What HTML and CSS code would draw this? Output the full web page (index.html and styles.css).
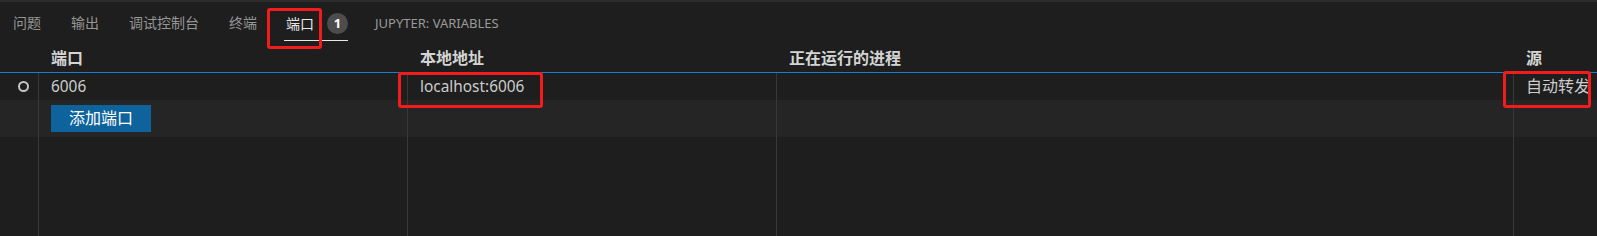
FILE: index.html
```html
<!DOCTYPE html>
<html lang="zh-CN">
<head>
<meta charset="utf-8">
<title>端口</title>
<link rel="stylesheet" href="styles.css">
</head>
<body>
<div class="panel">
  <div class="tabs">
    <div class="tab">问题</div>
    <div class="tab">输出</div>
    <div class="tab">调试控制台</div>
    <div class="tab">终端</div>
    <div class="tab active"><span>端口</span><span class="badge">1</span></div>
    <div class="tab upper">JUPYTER: VARIABLES</div>
  </div>
  <div class="table">
    <div class="row head">
      <div class="cell c0"></div>
      <div class="cell">端口</div>
      <div class="cell">本地地址</div>
      <div class="cell">正在运行的进程</div>
      <div class="cell">源</div>
    </div>
    <div class="row body">
      <div class="cell c0"><span class="ring"></span></div>
      <div class="cell sep latin">6006</div>
      <div class="cell sep latin">localhost:6006</div>
      <div class="cell sep"></div>
      <div class="cell sep">自动转发</div>
    </div>
    <div class="row body add">
      <div class="cell c0"></div>
      <div class="cell sep"><button class="btn">添加端口</button></div>
      <div class="cell sep"></div>
      <div class="cell sep"></div>
      <div class="cell sep"></div>
    </div>
    <div class="row body filler">
      <div class="cell c0"></div>
      <div class="cell sep"></div>
      <div class="cell sep"></div>
      <div class="cell sep"></div>
      <div class="cell sep"></div>
    </div>
  </div>
  <div class="mark m1"></div>
  <div class="mark m2"></div>
  <div class="mark m3"></div>
</div>
</body>
</html>
```

FILE: styles.css
```css
* { box-sizing: border-box; }
html, body { margin: 0; padding: 0; }
body {
  background: #1e1e1e;
  width: 1597px;
  height: 236px;
  overflow: hidden;
  font-family: "Noto Sans", "Noto Sans CJK SC", sans-serif;
  color: #cccccc;
}
.panel {
  position: relative;
  height: 236px;
  border-top: 2px solid #2b2b2b;
  display: flex;
  flex-direction: column;
}
.tabs {
  height: 42px;
  flex: none;
  display: flex;
  align-items: flex-start;
  gap: 30px;
  padding-left: 13px;
}
.tab {
  display: flex;
  align-items: center;
  font-size: 14px;
  line-height: 20px;
  padding-top: 11px;
  padding-bottom: 6px;
  border-bottom: 1px solid transparent;
  color: #969696;
  white-space: nowrap;
}
.tab.active {
  color: #e7e7e7;
  border-bottom-color: #e7e7e7;
  margin-left: -3px;
  margin-right: -3px;
  padding-left: 2px;
  gap: 13px;
}
.tab.upper { font-size: 13px; color: #9a9a9a; }
.badge {
  width: 21px;
  height: 21px;
  border-radius: 50%;
  background: #4d4d4d;
  color: #ffffff;
  font-size: 13px;
  line-height: 21px;
  text-align: center;
  font-weight: 700;
}
.table {
  flex: 1;
  display: flex;
  flex-direction: column;
}
.row {
  display: grid;
  grid-template-columns: 38px 369px 369px 737px 1fr;
}
.cell {
  padding-left: 13px;
  font-size: 16px;
  white-space: nowrap;
  overflow: hidden;
}
.cell.sep {
  border-left: 1px solid #383838;
  padding-left: 12px;
}
.cell.latin { font-size: 15.4px; }
.cell.c0 { padding-left: 0; }
.head {
  height: 29px;
  line-height: 28px;
  border-bottom: 1px solid #1a7dd0;
  font-weight: 700;
  color: #d4d4d4;
}
.body {
  height: 27px;
  line-height: 27px;
}
.body .c0 {
  display: flex;
  align-items: center;
  justify-content: center;
  padding-left: 8px;
}
.ring {
  width: 11px;
  height: 11px;
  border: 2px solid #c5c5c5;
  border-radius: 50%;
}
.add {
  height: 37px;
  background: #252526;
}
.add .cell { padding-top: 5px; }
.btn {
  width: 100px;
  height: 27px;
  border: 0;
  padding: 0;
  background: #0e639c;
  color: #ffffff;
  font-family: inherit;
  font-size: 16px;
  line-height: 27px;
  display: block;
}
.filler { flex: 1; height: auto; }
.mark {
  position: absolute;
  border: 3px solid #f21c1c;
  border-radius: 3px;
}
.m1 { left: 267px; top: 6px; width: 55px; height: 41px; }
.m2 { left: 398px; top: 70px; width: 145px; height: 36px; }
.m3 { left: 1503px; top: 69px; width: 88px; height: 37px; }
```
